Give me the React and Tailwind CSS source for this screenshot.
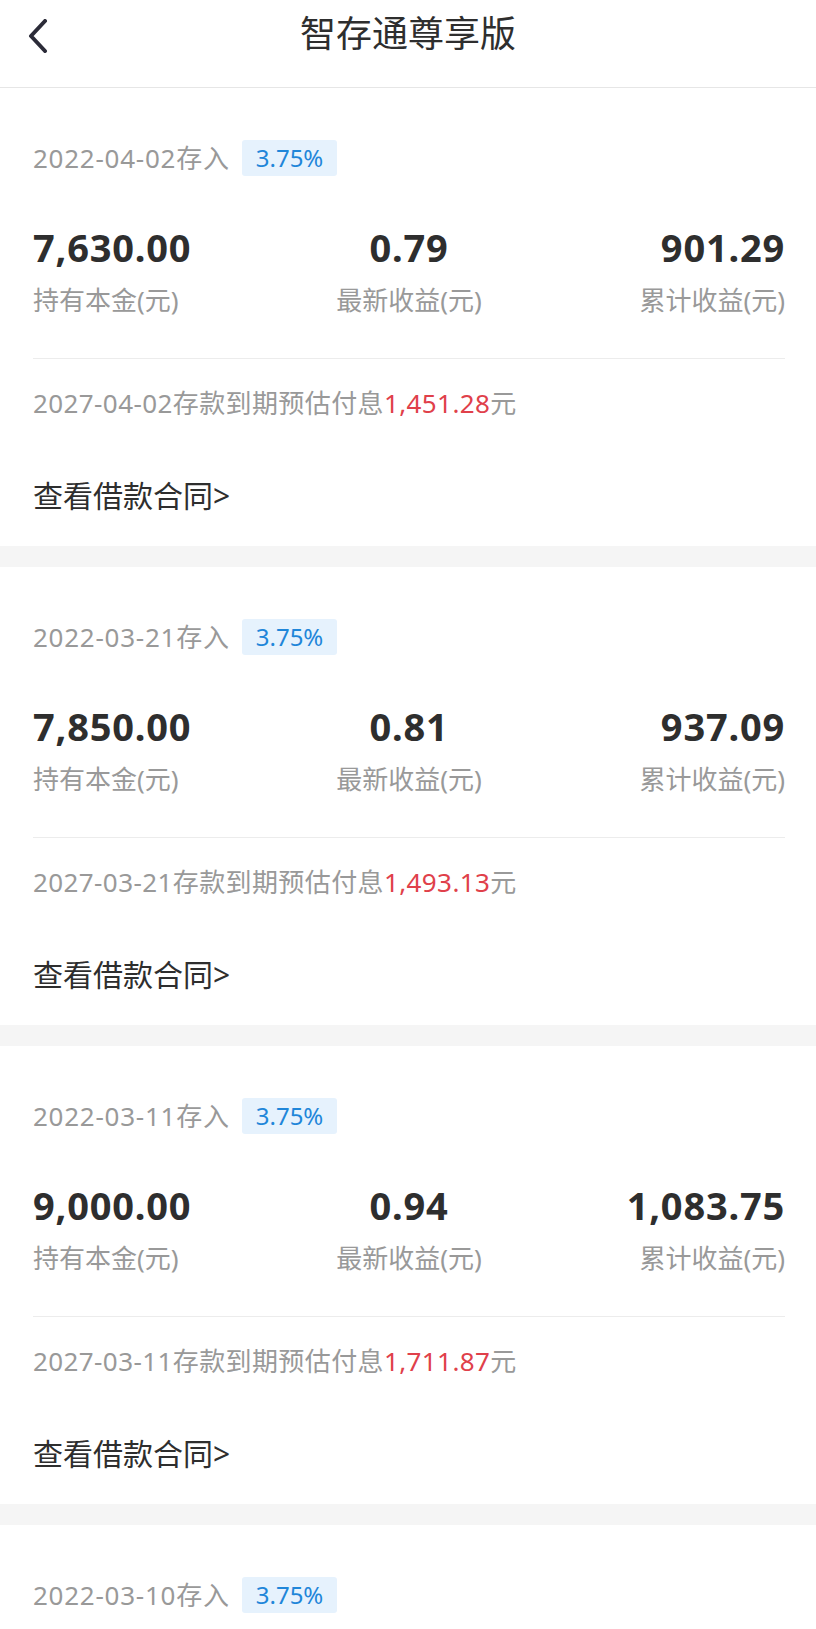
import React from "react";

const DEPOSITS = [
  { date: "2022-04-02", rate: "3.75%", principal: "7,630.00", latest: "0.79", total: "901.29", due: "2027-04-02", interest: "1,451.28" },
  { date: "2022-03-21", rate: "3.75%", principal: "7,850.00", latest: "0.81", total: "937.09", due: "2027-03-21", interest: "1,493.13" },
  { date: "2022-03-11", rate: "3.75%", principal: "9,000.00", latest: "0.94", total: "1,083.75", due: "2027-03-11", interest: "1,711.87" },
  { date: "2022-03-10", rate: "3.75%", principal: "9,000.00", latest: "0.94", total: "1,083.75", due: "2027-03-10", interest: "1,711.87" },
];

const FONT = { fontFamily: '"Noto Sans", "Noto Sans CJK SC", sans-serif' };

function Stat({ value, label, align }) {
  return (
    <div className={`flex flex-1 flex-col ${align}`}>
      <span className="h-[44px] text-[38px] leading-[44px] font-bold text-[#2e2e2e] tracking-[0.8px]">{value}</span>
      <span className="mt-[14px] h-[34px] text-[26px] leading-[34px] text-[#999999]">{label}</span>
    </div>
  );
}

function DepositCard({ item }) {
  return (
    <section className="bg-white pl-[33px] pr-[31px] pt-[52px] pb-[30px]">
      <div className="flex h-[36px] items-center">
        <span className="text-[26px] leading-[36px] tracking-[0.75px] text-[#999999]">{item.date}存入</span>
        <span className="ml-[12px] flex h-[36px] items-center rounded-[3px] bg-[#e6f2fd] px-[14px] text-[24px] text-[#1f86d9]">{item.rate}</span>
      </div>
      <div className="mt-[49px] flex">
        <Stat value={item.principal} label="持有本金(元)" align="items-start" />
        <Stat value={item.latest} label="最新收益(元)" align="items-center" />
        <Stat value={item.total} label="累计收益(元)" align="items-end" />
      </div>
      <div className="mt-[41px] h-px bg-[#ececec]" />
      <p className="mt-[27px] h-[34px] text-[26px] leading-[34px] tracking-[0.4px] text-[#999999]">
        {item.due}存款到期预估付息<span className="text-[#e0404a]">{item.interest}</span>元
      </p>
      <p className="mt-[56px] h-[40px] text-[30px] leading-[40px] text-[#2e2e2e]">查看借款合同&gt;</p>
    </section>
  );
}

export default function App() {
  return (
    <div className="h-[1629px] w-[816px] overflow-hidden bg-[#f5f5f5]" style={FONT}>
      <header className="h-[88px] border-b border-[#e6e6e6] bg-white">
        <div className="relative flex h-[68px] items-center justify-center">
          <svg className="absolute left-[26px] top-[19px]" width="24" height="34" viewBox="0 0 24 34" fill="none">
            <path d="M19 2 L5 17 L19 32" stroke="#2b2b38" strokeWidth="4" strokeLinecap="round" strokeLinejoin="round" />
          </svg>
          <h1 className="text-[36px] text-[#2e2e2e]">智存通尊享版</h1>
        </div>
      </header>
      <div className="flex flex-col gap-[21px]">
        {DEPOSITS.map((item) => <DepositCard key={item.date} item={item} />)}
      </div>
    </div>
  );
}
